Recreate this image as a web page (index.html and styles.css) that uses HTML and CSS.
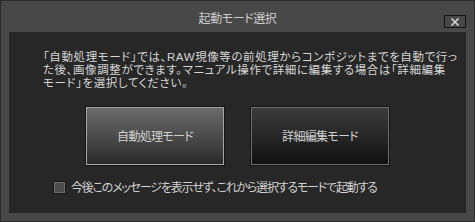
FILE: index.html
```html
<!DOCTYPE html>
<html lang="ja">
<head>
<meta charset="utf-8">
<link rel="stylesheet" href="styles.css">
</head>
<body>
<div class="window">
  <div class="titlebar">
    <span class="spacer"></span>
    <span class="title">起動モード選択</span>
    <button class="close" aria-label="閉じる">
      <svg width="10" height="8" viewBox="0 0 10 8"><path d="M1.5 0.5 L8.5 7.5 M8.5 0.5 L1.5 7.5" stroke="#d4d4d4" stroke-width="1.6" fill="none"/></svg>
    </button>
  </div>
  <div class="panel">
    <div class="message">
      <div class="line">「自動処理モード」では、RAW現像等の前処理からコンポジットまでを自動で行っ</div>
      <div class="line">た後、画像調整ができます。マニュアル操作で詳細に編集する場合は「詳細編集</div>
      <div class="line">モード」を選択してください。</div>
    </div>
    <div class="buttons">
      <button class="mode mode-auto">自動処理モード</button>
      <button class="mode mode-detail">詳細編集モード</button>
    </div>
    <label class="remember">
      <span class="check"></span>
      <span class="remember-text">今後このメッセージを表示せず、これから選択するモードで起動する</span>
    </label>
  </div>
</div>
</body>
</html>
```
FILE: styles.css
```css
html, body {
  margin: 0;
  padding: 0;
  background: #484848;
}
body {
  width: 475px;
  height: 222px;
  overflow: hidden;
  font-family: "Liberation Sans", "Noto Sans CJK JP", sans-serif;
  font-size: 12px;
  font-feature-settings: "palt";
}
.window {
  box-sizing: border-box;
  width: 475px;
  height: 222px;
  background: #484848;
  border: 1px solid #2c2c2c;
  display: flex;
  flex-direction: column;
}
.titlebar {
  height: 31px;
  box-sizing: border-box;
  padding: 0 8px;
  display: grid;
  grid-template-columns: 1fr auto 1fr;
  align-items: start;
}
.title {
  color: #cdcdcd;
  font-size: 12px;
  line-height: 14px;
  margin-top: 11px;
  letter-spacing: -0.4px;
}
.close {
  justify-self: end;
  margin: 14px 0 0 0;
  width: 22px;
  height: 13px;
  box-sizing: border-box;
  padding: 0;
  background: #474747;
  border: 1px solid #141414;
  display: flex;
  align-items: center;
  justify-content: center;
}
.close svg { display: block; }
.panel {
  margin: 0 8px;
  height: 181px;
  background: #272727;
  box-sizing: border-box;
  padding: 19px 0 0 34px;
  display: flex;
  flex-direction: column;
}
.message {
  color: #d6d6d6;
  font-size: 11.5px;
  letter-spacing: 0.6px;
}
.line {
  height: 12.9px;
  line-height: 12.9px;
  white-space: nowrap;
}
.buttons {
  display: flex;
  justify-content: center;
  gap: 25px;
  margin: 16px 0 0 -34px;
}
.mode {
  width: 140px;
  height: 60px;
  box-sizing: border-box;
  padding: 0;
  font-family: inherit;
  font-feature-settings: "palt";
  font-size: 12px;
  color: #d2d2d2;
  letter-spacing: -0.7px;
  border: 1px solid #141414;
}
.mode-auto {
  background: linear-gradient(#6c6c6c, #2a2a2a);
  box-shadow: inset 0 0 0 1px #a6a6a6;
}
.mode-detail {
  background: linear-gradient(#3c3c3c, #101010);
  box-shadow: inset 0 0 0 1px #707070;
}
.remember {
  display: flex;
  align-items: center;
  gap: 5px;
  margin: 15px 0 0 10px;
  color: #d2d2d2;
  line-height: 14px;
}
.remember-text {
  letter-spacing: -1.2px;
}
.check {
  width: 13px;
  height: 13px;
  box-sizing: border-box;
  border: 1px solid #141414;
  background: #4c4c4c;
  box-shadow: inset 0 0 0 1px #6e6e6e;
}
```
